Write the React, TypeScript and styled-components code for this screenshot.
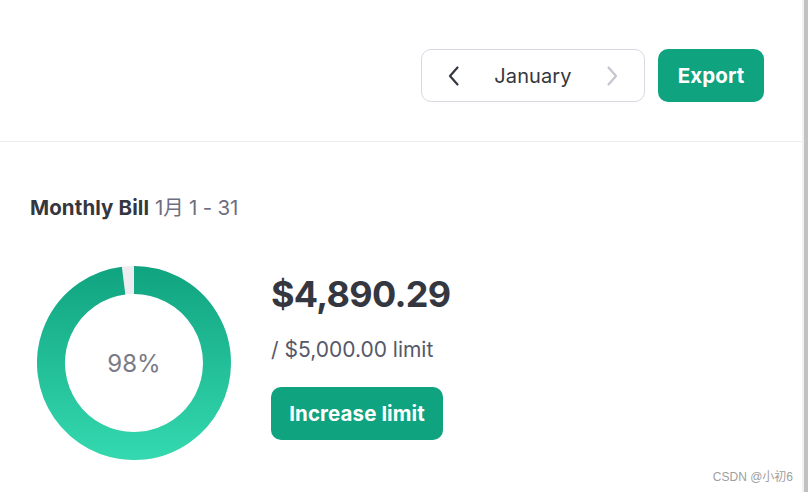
import React from "react";
import styled, { createGlobalStyle } from "styled-components";

const GlobalStyle = createGlobalStyle`
  html, body {
    margin: 0;
    padding: 0;
    background: #ffffff;
  }
  body {
    font-family: Inter, "Noto Sans", "Noto Sans CJK SC", sans-serif;
    color: #353740;
  }
`;

const Page = styled.div`
  display: flex;
  width: 808px;
  height: 492px;
  overflow: hidden;
`;

const Main = styled.div`
  flex: 1;
  display: flex;
  flex-direction: column;
  position: relative;
`;

const Scrollbar = styled.div`
  width: 6px;
  display: flex;

  &::before {
    content: "";
    width: 2px;
    background: #f1f1f1;
  }
  &::after {
    content: "";
    flex: 1;
    background: #c1c1c1;
  }
`;

const Header = styled.div`
  height: 142px;
  box-sizing: border-box;
  border-bottom: 1px solid #ececf1;
  display: flex;
  justify-content: flex-end;
  align-items: flex-start;
  gap: 13px;
  padding: 49px 38px 0 0;
`;

const MonthPicker = styled.div`
  width: 224px;
  height: 53px;
  box-sizing: border-box;
  border: 1px solid #d9d9e3;
  border-radius: 10px;
  display: flex;
  align-items: center;
  justify-content: space-between;
  padding: 1px 22px 0 22px;
`;

const Arrow = styled.button<{ $disabled?: boolean }>`
  border: none;
  background: none;
  padding: 0;
  width: 20px;
  height: 24px;
  display: flex;
  align-items: center;
  justify-content: center;
  color: ${(p) => (p.$disabled ? "#c5c5d2" : "#353740")};
  cursor: pointer;
`;

const Month = styled.span`
  font-size: 20px;
  color: #353740;
  letter-spacing: 0.1px;
`;

const GreenButton = styled.button<{ $width: number }>`
  width: ${(p) => p.$width}px;
  height: 53px;
  border: none;
  border-radius: 10px;
  background: #10a37f;
  color: #ffffff;
  font-family: Inter, "Noto Sans", sans-serif;
  font-size: 20.5px;
  font-weight: 700;
  letter-spacing: 0.1px;
  cursor: pointer;
`;

const Section = styled.div`
  padding: 54px 0 0 30px;
  display: flex;
  flex-direction: column;
`;

const Title = styled.div`
  font-size: 20.5px;
  line-height: 24px;
  font-weight: 700;
  color: #353740;
  letter-spacing: 0.1px;

  span {
    font-weight: 400;
    color: #6e6e80;
    margin-left: 1px;
    letter-spacing: -0.2px;
    font-family: Inter, "Noto Sans CJK SC", sans-serif;
  }
`;

const BillRow = styled.div`
  display: flex;
  align-items: flex-start;
  gap: 40px;
  margin-top: 46px;
  margin-left: 7px;
`;

const Donut = styled.div`
  position: relative;
  width: 194px;
  height: 194px;

  svg {
    display: block;
  }
`;

const Percent = styled.div`
  position: absolute;
  inset: 0;
  display: flex;
  align-items: center;
  justify-content: center;
  font-size: 24px;
  color: #7b7b88;
`;

const Amounts = styled.div`
  display: flex;
  flex-direction: column;
  align-items: flex-start;
  padding-top: 6px;
`;

const Total = styled.div`
  font-size: 36px;
  line-height: 44px;
  font-weight: 700;
  color: #353740;
  letter-spacing: -0.7px;
`;

const Limit = styled.div`
  font-size: 21px;
  line-height: 24px;
  color: #565869;
  margin-top: 22px;
`;

const ButtonSpace = styled.div`
  margin-top: 25px;
`;

const Watermark = styled.div`
  position: absolute;
  right: 9px;
  bottom: 8px;
  font-family: "Liberation Sans", "Noto Sans CJK SC", sans-serif;
  font-size: 12px;
  color: #a0a0a0;
`;

function Chevron({ dir }: { dir: "left" | "right" }) {
  return (
    <svg width="14" height="22" viewBox="0 0 14 22" fill="none">
      <path
        d={dir === "left" ? "M10.5 2.5 L3 11 L10.5 19.5" : "M3.5 2.5 L11 11 L3.5 19.5"}
        stroke="currentColor"
        strokeWidth="2.2"
        strokeLinecap="round"
        strokeLinejoin="round"
      />
    </svg>
  );
}

function Ring({ pct }: { pct: number }) {
  const size = 194;
  const sw = 28;
  const r = (size - sw) / 2;
  const c = size / 2;
  const a = (pct / 100) * Math.PI * 2;
  const ex = c + r * Math.sin(a);
  const ey = c - r * Math.cos(a);
  return (
    <svg width={size} height={size} viewBox={`0 0 ${size} ${size}`}>
      <defs>
        <linearGradient id="ringGrad" x1="0" y1="0" x2="0" y2={size} gradientUnits="userSpaceOnUse">
          <stop offset="0" stopColor="#10a37f" />
          <stop offset="1" stopColor="#34d9b0" />
        </linearGradient>
      </defs>
      <circle cx={c} cy={c} r={r} fill="none" stroke="#ececf1" strokeWidth={sw} />
      <path
        d={`M ${c} ${c - r} A ${r} ${r} 0 ${a > Math.PI ? 1 : 0} 1 ${ex} ${ey}`}
        fill="none"
        stroke="url(#ringGrad)"
        strokeWidth={sw}
      />
    </svg>
  );
}

export default function App() {
  return (
    <>
      <GlobalStyle />
      <Page>
        <Main>
          <Header>
            <MonthPicker>
              <Arrow aria-label="Previous month">
                <Chevron dir="left" />
              </Arrow>
              <Month>January</Month>
              <Arrow $disabled aria-label="Next month">
                <Chevron dir="right" />
              </Arrow>
            </MonthPicker>
            <GreenButton $width={106}>Export</GreenButton>
          </Header>
          <Section>
            <Title>
              Monthly Bill <span>1月 1 - 31</span>
            </Title>
            <BillRow>
              <Donut>
                <Ring pct={98} />
                <Percent>98%</Percent>
              </Donut>
              <Amounts>
                <Total>$4,890.29</Total>
                <Limit>/ $5,000.00 limit</Limit>
                <ButtonSpace>
                  <GreenButton $width={172}>Increase limit</GreenButton>
                </ButtonSpace>
              </Amounts>
            </BillRow>
          </Section>
          <Watermark>CSDN @小初6</Watermark>
        </Main>
        <Scrollbar />
      </Page>
    </>
  );
}
